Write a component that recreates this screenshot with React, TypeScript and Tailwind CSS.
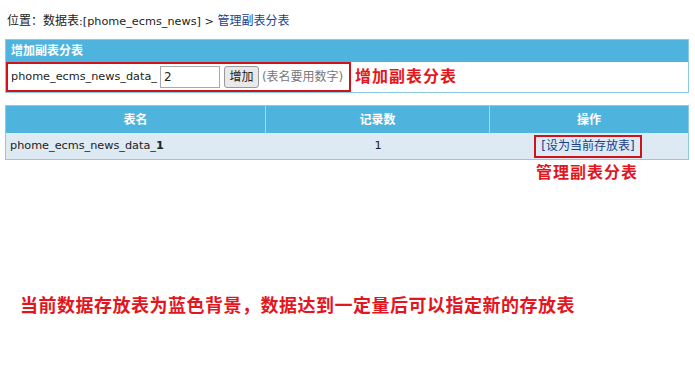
export default function App() {
  const font = { fontFamily: '"DejaVu Sans", "Noto Sans CJK SC", sans-serif' };

  return (
    <div className="w-[695px] h-[367px] bg-white text-[11.25px] text-[#222] whitespace-nowrap" style={font}>
      {/* 位置 */}
      <div className="pt-[13px] pl-[7px] h-[39px] leading-[16px]">
        <span className="text-[12px]">位置：数据表</span>:[phome_ecms_news] &gt;{" "}
        <span className="text-[12px] text-[#1b3f8b]">管理副表分表</span>
      </div>

      {/* 增加副表分表 */}
      <div className="ml-[5px] w-[684px] border border-[#8ccbe6]">
        <div className="h-[22px] bg-[#4fb4dd] text-white text-[12px] font-bold pl-[5px] leading-[22px]">增加副表分表</div>
        <div className="h-[30px] flex items-center">
          <div className="h-[30px] w-[345px] shrink-0 border-2 border-[#d0121b] flex items-center pl-[3px]">
            <span>phome_ecms_news_data_</span>
            <input
              defaultValue="2"
              className="ml-[3px] w-[60px] h-[22px] shrink-0 border border-[#a9a9a9] px-[3px] text-[12px] outline-none"
            />
            <button className="ml-[4px] h-[22px] w-[35px] shrink-0 border border-[#9a9a9a] rounded-[3px] bg-[#e9e9e9] text-[12px]">
              增加
            </button>
            <span className="ml-[3px] text-[12px] text-[#777]">(表名要用数字)</span>
          </div>
          <span className="ml-[4px] text-[#e3161e] text-[16px] font-bold tracking-[1px]">增加副表分表</span>
        </div>
      </div>

      {/* 管理副表分表 */}
      <div className="mt-[12px] ml-[5px] w-[684px] border border-[#8ccbe6]">
        <div className="grid grid-cols-[260px_224px_1fr] h-[27px] bg-[#4fb4dd] text-white text-[12px] font-bold">
          <div className="flex items-center justify-center border-r border-[#a6d8ee]">表名</div>
          <div className="flex items-center justify-center border-r border-[#a6d8ee]">记录数</div>
          <div className="flex items-center justify-center">操作</div>
        </div>
        <div className="grid grid-cols-[260px_224px_1fr] h-[26px] bg-[#dde9f3]">
          <div className="flex items-center pl-[4px]">
            phome_ecms_news_data_<b>1</b>
          </div>
          <div className="flex items-center justify-center">1</div>
          <div className="flex items-center justify-center">
            <span className="border-2 border-[#d0121b] px-[5px] h-[23px] flex items-center text-[12px] text-[#1b3f8b] ml-[-2px]">
              [设为当前存放表]
            </span>
          </div>
        </div>
      </div>
      <div className="ml-[536px] mt-[1px] text-[#e3161e] text-[16px] font-bold tracking-[1px]">管理副表分表</div>

      <div className="mt-[107px] ml-[20px] text-[#e3161e] text-[18px] font-bold tracking-[0.5px]">
        当前数据存放表为蓝色背景，数据达到一定量后可以指定新的存放表
      </div>
    </div>
  );
}
